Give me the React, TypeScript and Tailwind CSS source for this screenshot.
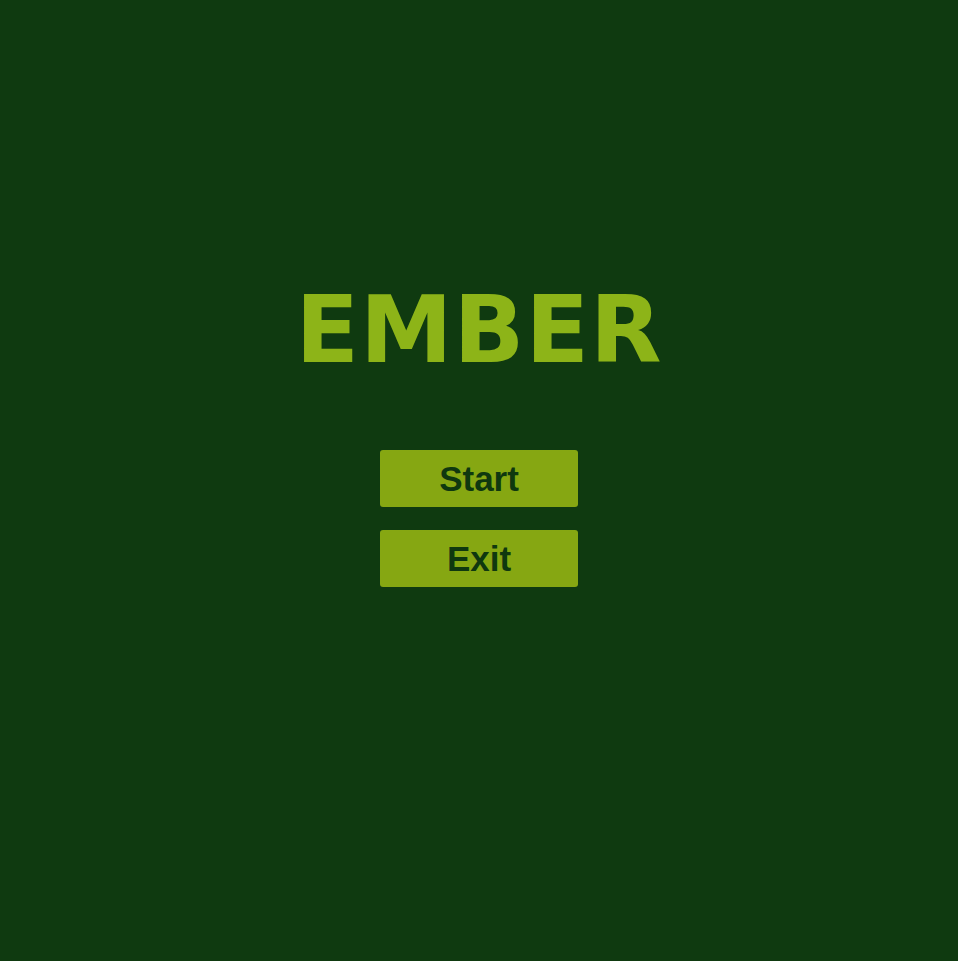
import React from 'react';

const MenuButton: React.FC<{ label: string; onClick?: () => void }> = ({ label, onClick }) => (
  <button
    type="button"
    onClick={onClick}
    className="w-[198px] h-[57px] rounded-[3px] bg-[#86a712] text-[#0f380f] text-[35px] font-bold leading-none flex items-center justify-center font-['Liberation_Sans',Arial,sans-serif]"
  >
    {label}
  </button>
);

const App: React.FC = () => {
  return (
    <div className="min-h-screen w-full bg-[#0f3a10] flex flex-col items-center pt-[284px]">
      <h1 className="text-[93px] leading-none font-bold tracking-[1px] text-[#8db418] font-['DejaVu_Sans',sans-serif]">
        EMBER
      </h1>
      <div className="mt-[73px] flex flex-col gap-[23px]">
        <MenuButton label="Start" />
        <MenuButton label="Exit" />
      </div>
    </div>
  );
};

export default App;
